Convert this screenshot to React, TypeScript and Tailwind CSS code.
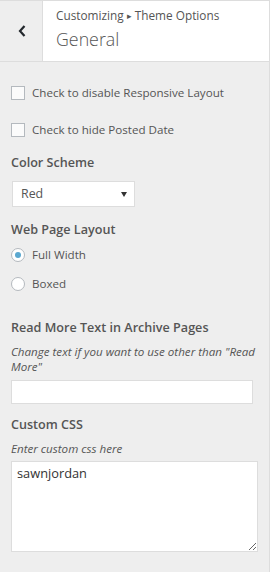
import React from "react";

export default function App() {
  return (
    <div
      className="w-[270px] h-[572px] bg-[#eeeeee] border-r border-[#dddddd] flex flex-col text-[#555555] overflow-hidden"
      style={{ fontFamily: '"Open Sans", "Liberation Sans", sans-serif' }}
    >
      <div className="flex h-[62px] border-t border-b border-[#dddddd] shrink-0">
        <div className="w-[43px] border-r border-[#dddddd] flex items-center justify-center">
          <svg width="8" height="12" viewBox="0 0 8 12" className="ml-[1px]">
            <path d="M6.5 1 L2 6 L6.5 11" fill="none" stroke="#23282d" strokeWidth="2.2" />
          </svg>
        </div>
        <div className="flex-1 bg-white pl-[13px] pt-[5px]">
          <div className="text-[11.8px] leading-[18px] text-[#555]">
            Customizing <span className="text-[9px] align-[1px]">▸</span> Theme Options
          </div>
          <div className="text-[17.8px] leading-[24px] font-light text-[#555] mt-[2px]">General</div>
        </div>
      </div>

      <div className="px-[11px] flex flex-col">
        <label className="flex items-center h-[20px] mt-[21px] text-[11.6px]">
          <span className="w-[14px] h-[14px] border border-[#b4b9be] bg-[#fbfbfb] shrink-0" />
          <span className="ml-[7px]">Check to disable Responsive Layout</span>
        </label>
        <label className="flex items-center h-[20px] mt-[17px] text-[11.6px]">
          <span className="w-[14px] h-[14px] border border-[#b4b9be] bg-[#fbfbfb] shrink-0" />
          <span className="ml-[7px]">Check to hide Posted Date</span>
        </label>

        <div className="mt-[13px] text-[12.6px] leading-[20px] font-semibold">Color Scheme</div>
        <div className="mt-[8px] ml-[1px] w-[123px] h-[26px] bg-white border border-[#dddddd] flex items-center justify-between pl-[8px] pr-[7px] text-[12.4px]">
          <span>Red</span>
          <svg width="6" height="5" viewBox="0 0 6 5">
            <path d="M0 0 L6 0 L3 5 Z" fill="#333" />
          </svg>
        </div>

        <div className="mt-[13px] text-[12.6px] leading-[20px] font-semibold">Web Page Layout</div>
        <label className="flex items-center h-[20px] mt-[5px] text-[11.6px]">
          <span className="w-[14px] h-[14px] rounded-full border border-[#b4b9be] bg-white shrink-0 flex items-center justify-center">
            <span className="w-[6px] h-[6px] rounded-full bg-[#5ba8d0]" />
          </span>
          <span className="ml-[7px]">Full Width</span>
        </label>
        <label className="flex items-center h-[20px] mt-[9px] text-[11.6px]">
          <span className="w-[14px] h-[14px] rounded-full border border-[#b4b9be] bg-white shrink-0" />
          <span className="ml-[7px]">Boxed</span>
        </label>

        <div className="mt-[24px] text-[12.6px] leading-[20px] font-semibold">Read More Text in Archive Pages</div>
        <div className="mt-[6px] mr-[-10px] text-[11.6px] leading-[15px] italic">
          Change text if you want to use other than "Read More"
        </div>
        <input
          type="text"
          className="mt-[6px] w-[242px] h-[24px] bg-white border border-[#dddddd] outline-none"
        />

        <div className="mt-[11px] text-[12.6px] leading-[20px] font-semibold">Custom CSS</div>
        <div className="mt-[6px] text-[11.6px] leading-[15px] italic">Enter custom css here</div>
        <textarea
          className="mt-[5px] w-[247px] h-[91px] bg-white border border-[#dddddd] outline-none px-[5px] py-[2px] text-[12.8px] leading-[18px] text-[#333] resize-y"
          defaultValue="sawnjordan"
          style={{ fontFamily: '"Open Sans", "Liberation Sans", sans-serif' }}
        />
      </div>
    </div>
  );
}
